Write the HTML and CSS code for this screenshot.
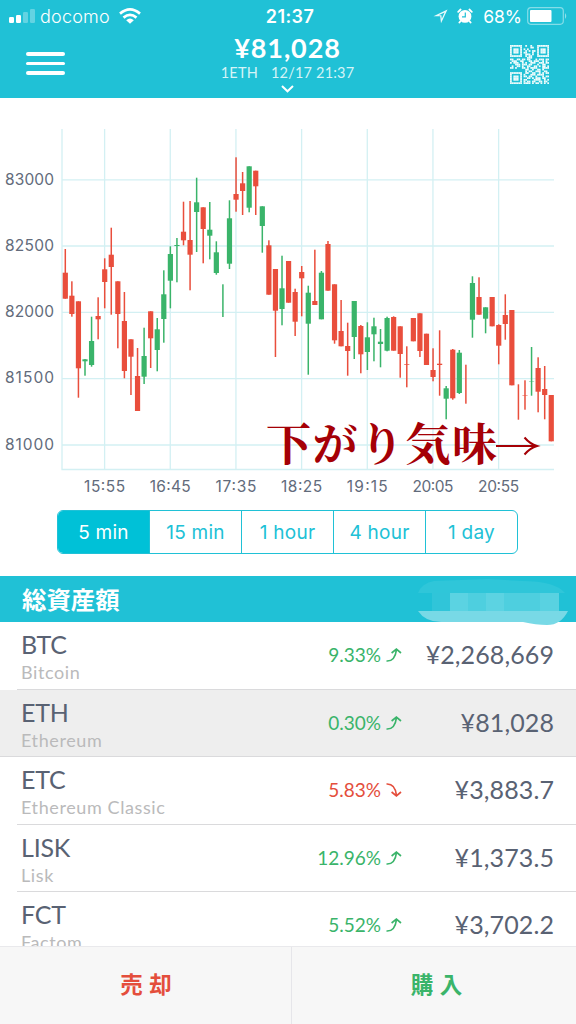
FILE: index.html
```html
<!DOCTYPE html>
<html lang="ja">

<head>
    <meta charset="UTF-8">
    <title>ETH</title>
    <link rel="stylesheet" href="styles.css">
</head>

<body>
    <div class="header">
        <div class="status">
            <div class="status-left">
                <svg width="26" height="16" viewBox="0 0 26 16" fill="#fff">
                    <rect x="0" y="9" width="5" height="6" rx="1.2"/>
                    <rect x="7" y="7" width="5" height="8" rx="1.2"/>
                    <rect x="14" y="4" width="5" height="11" rx="1.2" opacity=".3"/>
                    <rect x="21" y="1" width="5" height="14" rx="1.2" opacity=".3"/>
                </svg>
                <span class="carrier">docomo</span>
                <svg width="22" height="16" viewBox="0 0 22 16" fill="none" stroke="#fff" stroke-width="2.7">
                    <path d="M1 5.6Q11-2.8 21 5.6M4.5 9.6Q11 4.1 17.5 9.6"/>
                    <path d="M7.2 12.2Q11 9 14.8 12.2L11 15.8Z" fill="#fff" stroke="none"/>
                </svg>
            </div>
            <div class="clock">21:37</div>
            <div class="status-right">
                <svg width="15" height="15" viewBox="0 0 15 15">
                    <path d="M14.5 .5L.5 7.3H7.2L8 14.3ZM11.6 3.6L8.8 9.8L8.4 6.2H5.6Z" fill="#e8fafb" fill-rule="evenodd"/>
                </svg>
                <svg class="alarm" width="16" height="16" viewBox="0 0 16 16">
                    <circle cx="8" cy="8.4" r="6.4" fill="#fff"/>
                    <path d="M1.2 3.8L3.6 1.5M14.8 3.8L12.4 1.5M3.4 13.2L2.4 14.6M12.6 13.2L13.6 14.6" stroke="#fff" stroke-width="1.8" stroke-linecap="round"/>
                    <path d="M8.3 4.6V8.8H5" fill="none" stroke="#20c1d6" stroke-width="1.2"/>
                </svg>
                <span class="percent">68%</span>
                <svg width="41" height="18" viewBox="0 0 41 18">
                    <rect x=".7" y=".7" width="35.6" height="16.6" rx="3.2" fill="none" stroke="#fff" stroke-opacity=".45" stroke-width="1.2"/>
                    <rect x="3" y="3" width="21.5" height="12" rx="1" fill="#fff"/>
                    <path d="M38 6Q40.5 9 38 12Z" fill="#fff" opacity=".5"/>
                </svg>
            </div>
        </div>
        <div class="nav">
            <a href="javascript:;" class="menu"><i></i><i></i><i></i></a>
            <div class="title">
                <div class="price">¥81,028</div>
                <div class="sub"><span>1ETH</span><span>12/17 21:37</span></div>
                <svg width="13" height="8" viewBox="0 0 13 8" fill="none" stroke="#fff" stroke-width="2">
                    <path d="M1 1L6.5 6.3L12 1"/>
                </svg>
            </div>
            <svg id="qr" class="qr" width="39" height="39" viewBox="0 0 23 23"></svg>
        </div>
    </div>

    <svg id="chart" class="chart" width="576" height="412" viewBox="0 98 576 412">
        <g id="grid"></g>
        <g id="candles"></g>
        <text class="note" x="266" y="461" textLength="231">下がり気味</text>
        <path class="arrow" d="M496 446H536M524.5 437.5Q530 444 537 446Q530 448 524.5 454.5"/>
    </svg>

    <div class="tabs">
        <a href="javascript:;" class="active">5 min</a><a href="javascript:;">15 min</a><a href="javascript:;">1 hour</a><a href="javascript:;">4 hour</a><a href="javascript:;">1 day</a>
    </div>

    <div class="total">
        <span>総資産額</span>
        <svg class="mosaic" width="150" height="46" viewBox="0 0 150 46">
            <path d="M0 17Q4 7 16 5L70 3L104 5Q137 5 147 17Z" fill="#2fc6d9"/>
            <rect x="14" y="17" width="18" height="18" fill="#30c5d9"/>
            <rect x="32" y="17" width="109" height="18" fill="#4ecfdf"/>
            <rect x="32" y="17" width="18" height="18" fill="#5bd3e2"/>
            <rect x="68" y="17" width="18" height="18" fill="#5cd3e2"/>
            <rect x="122" y="17" width="19" height="18" fill="#59d2e1"/>
            <path d="M0 35H150Q143 49 129 49Q118 49 105 46H26Q8 47 0 35Z" fill="#78d9e6"/>
        </svg>
    </div>

    <div class="list">
        <div class="row">
            <div class="coin"><b>BTC</b><span>Bitcoin</span></div>
            <div class="rate up">9.33%<svg width="16" height="14" viewBox="0 0 16 14"><path d="M.5 13Q9 13.5 10.4 2M5.6 5L10.4 1.2L15 5"/></svg></div>
            <div class="value">¥2,268,669</div>
        </div>
        <div class="row current">
            <div class="coin"><b>ETH</b><span>Ethereum</span></div>
            <div class="rate up">0.30%<svg width="16" height="14" viewBox="0 0 16 14"><path d="M.5 13Q9 13.5 10.4 2M5.6 5L10.4 1.2L15 5"/></svg></div>
            <div class="value">¥81,028</div>
        </div>
        <div class="row">
            <div class="coin"><b>ETC</b><span>Ethereum Classic</span></div>
            <div class="rate down">5.83%<svg width="16" height="14" viewBox="0 0 16 14"><path d="M.5 1Q9 .5 10.4 12M5.6 9L10.4 12.8L15 9"/></svg></div>
            <div class="value">¥3,883.7</div>
        </div>
        <div class="row">
            <div class="coin"><b>LISK</b><span>Lisk</span></div>
            <div class="rate up">12.96%<svg width="16" height="14" viewBox="0 0 16 14"><path d="M.5 13Q9 13.5 10.4 2M5.6 5L10.4 1.2L15 5"/></svg></div>
            <div class="value">¥1,373.5</div>
        </div>
        <div class="row">
            <div class="coin"><b>FCT</b><span>Factom</span></div>
            <div class="rate up">5.52%<svg width="16" height="14" viewBox="0 0 16 14"><path d="M.5 13Q9 13.5 10.4 2M5.6 5L10.4 1.2L15 5"/></svg></div>
            <div class="value">¥3,702.2</div>
        </div>
    </div>

    <div class="footer">
        <a href="javascript:;" class="sell">売 却</a>
        <a href="javascript:;" class="buy">購 入</a>
    </div>

    <script src="chart.js"></script>
</body>

</html>
```

FILE: styles.css
```css
* {
    margin: 0;
    padding: 0;
    box-sizing: border-box;
    text-decoration: none;
}

body {
    display: flex;
    flex-direction: column;
    width: 576px;
    height: 1024px;
    overflow: hidden;
    background-color: #fff;
    font-family: Lato, "Noto Sans CJK JP", sans-serif;
    color: #596273;
}

svg {
    display: block;
    flex: none;
}

.header {
    flex: none;
    height: 98px;
    background-color: #20c1d6;
    color: #fff;
}

.status {
    display: grid;
    grid-template-columns: 1fr 60px 1fr;
    align-items: center;
    height: 32px;
    padding: 0 8px 0 9px;
    font-family: Inter, sans-serif;
}

.status-left,
.status-right {
    display: flex;
    align-items: center;
}

.status-right {
    justify-content: flex-end;
}

.carrier {
    width: 70px;
    margin: 0 9px 0 5px;
    font-size: 18px;
    letter-spacing: .2px;
    font-weight: 300;
}

.clock {
    padding-left: 3px;
    text-align: center;
    font-size: 18px;
    font-weight: 600;
    letter-spacing: .4px;
}

.alarm {
    margin: 0 10px 0 9px;
}

.percent {
    margin-right: 5px;
    font-size: 17.5px;
    font-weight: 400;
}

.nav {
    display: grid;
    grid-template-columns: 1fr 200px 1fr;
    height: 66px;
    padding: 0 27px 0 26px;
}

.menu {
    display: flex;
    flex-direction: column;
    gap: 6px;
    width: 39px;
    padding-top: 20px;
}

.menu i {
    height: 3.6px;
    border-radius: 2px;
    background-color: #fff;
}

.title {
    display: flex;
    flex-direction: column;
    align-items: center;
}

.price {
    line-height: 32px;
    font-size: 27px;
    font-weight: 700;
    letter-spacing: .9px;
}

.sub {
    display: flex;
    gap: 13px;
    height: 21px;
    line-height: 17px;
    font-size: 14.5px;
    letter-spacing: .2px;
    color: #d5f4f7;
}

.qr {
    justify-self: end;
    margin-top: 13px;
}

.chart {
    font-family: Inter, sans-serif;
    font-size: 15.5px;
    fill: #626b7b;
}

.line {
    stroke: #d3f0f3;
    stroke-width: 1.3;
}

.note {
    font-family: "Noto Serif CJK JP", "Noto Sans CJK JP", serif;
    font-size: 45px;
    font-weight: 700;
    fill: #a50006;
}

.arrow {
    fill: none;
    stroke: #a50006;
    stroke-width: 2;
}

.tabs {
    display: flex;
    flex: none;
    width: 461px;
    height: 44px;
    margin: 0 0 22px 57px;
    border: solid 1.6px #20c1d6;
    border-radius: 6px;
    overflow: hidden;
}

.tabs a {
    flex: 1;
    line-height: 43px;
    border-left: solid 1.6px #20c1d6;
    text-align: center;
    font-family: Inter, sans-serif;
    font-size: 19px;
    letter-spacing: .25px;
    color: #20c1d6;
}

.tabs a:first-child {
    border-left: 0;
}

.tabs .active {
    background-color: #00c1d7;
    color: #fff;
}

.total {
    display: flex;
    flex: none;
    justify-content: space-between;
    height: 46px;
    padding: 0 8px 0 22px;
    line-height: 45px;
    background-color: #20c1d6;
    color: #fff;
    font-size: 24.4px;
}

.total span {
    font-family: "Noto Sans CJK JP", sans-serif;
    font-weight: 600;
}

.mosaic {
    overflow: visible;
}

.list {
    flex: 1;
    overflow: hidden;
}

.row {
    display: flex;
    height: 67.5px;
    margin-left: 17px;
    padding: 0 22px 0 4px;
    border-bottom: solid 1px #dadadc;
}

.current {
    margin-left: 0;
    padding-left: 21px;
    background-color: #eee;
}

.coin {
    flex: 1;
    padding-top: 7px;
}

.coin b {
    display: block;
    line-height: 30px;
    font-size: 25px;
    font-weight: 400;
    letter-spacing: -.2px;
}

.coin span {
    display: block;
    line-height: 27px;
    font-size: 18px;
    letter-spacing: .6px;
    color: #bababb;
}

.rate {
    display: flex;
    align-items: center;
    gap: 5px;
    font-size: 19px;
    line-height: 66px;
}

.rate path {
    fill: none;
    stroke: currentColor;
    stroke-width: 1.7;
}

.up,
.buy {
    color: #3ab46a;
}

.down,
.sell {
    color: #e44e3c;
}

.value {
    width: 152px;
    line-height: 64px;
    text-align: right;
    font-size: 25px;
    letter-spacing: .1px;
}

.footer {
    display: flex;
    flex: none;
    height: 78px;
    border-top: solid 1px #e9e9ec;
    background-color: #f7f7f7;
}

.footer a {
    flex: 1;
    line-height: 76px;
    padding-left: 5px;
    text-align: center;
    font-size: 22.5px;
    font-weight: 700;
    word-spacing: 1px;
}

.footer .sell {
    flex: 0 0 292px;
    padding-left: 1px;
    border-right: solid 1.5px #e6e6ea;
}
```

FILE: chart.js
```js
// x step of one 5 min candle
var STEP = 6.567, START = 65.3;
var NS = 'http://www.w3.org/2000/svg';

// [wick top, body top, body bottom, wick bottom, 1 = up]
var data = [
    [249, 272.7, 298.7, 298.7, 0], [281.3, 295.7, 314, 316.7, 0], [301.3, 301.3, 368.3, 397.7, 0],
    [359, 359.3, 361.3, 375.7, 1], [316.7, 341, 365, 366.7, 1], [297.3, 316, 319.3, 339.3, 0],
    [258.3, 269.3, 282, 308.3, 0], [227.7, 254.7, 267, 314.7, 0], [281.3, 281.3, 314, 348.3, 0],
    [292, 321, 371, 378.3, 0], [339.3, 339.3, 356.7, 395, 0], [348, 376, 411, 411, 0],
    [327.7, 356, 376.7, 384, 1], [311.3, 311.3, 338.3, 368, 0], [318, 329.3, 350, 371.3, 1],
    [270.3, 294.3, 319, 342.7, 1], [246.3, 254, 280.7, 308.3, 1], [238, 245, 246, 282.3, 1],
    [201.7, 231.7, 240.3, 245.3, 0], [201, 240, 254.7, 290.3, 0], [177.7, 202.3, 212, 252, 1],
    [207.3, 207.3, 229, 263.3, 0], [202, 229.7, 235.7, 259.3, 1], [241.3, 252.3, 273, 274.7, 1],
    [284.3, 300, 300, 317, 1], [200.3, 218.3, 263.7, 269, 1], [157.3, 194, 199.7, 211.7, 0],
    [172, 183.3, 191, 215, 0], [166.3, 166.3, 207.7, 212.3, 1], [170.7, 170.7, 186.3, 215, 0],
    [206.3, 206.3, 226, 252.7, 1], [240.3, 245.3, 294.7, 294.7, 0], [269, 269, 310.7, 357, 0],
    [255.7, 288.3, 309, 325.3, 1], [261, 261, 302.7, 302.7, 0], [288.7, 292, 321.7, 336, 0],
    [266, 272, 278.3, 316.3, 0], [285.7, 292.7, 323.7, 374.7, 1], [249.7, 301, 305, 305, 0],
    [271, 272.7, 319.3, 319.3, 1], [241, 244, 290.7, 290.7, 0], [284.3, 284.3, 340.3, 343.7, 0],
    [300, 331, 346.3, 346.3, 0], [322.7, 346, 351, 375.7, 0], [301, 301, 337, 359, 1],
    [325, 326, 354.3, 373.3, 0], [322.3, 337.3, 352, 370, 1], [317.7, 326.3, 334.3, 361.3, 1],
    [329, 341.7, 344, 367.3, 1], [316.7, 318, 350.7, 351.3, 1], [316.3, 317, 350.7, 350.7, 0],
    [326.3, 326.3, 354, 377.7, 0], [346.3, 364, 364.7, 387.3, 0], [318, 318, 341.3, 341.3, 0],
    [313.3, 313.3, 351, 357, 0], [333.7, 333.7, 365, 365, 0], [348.3, 370, 377, 381.3, 0],
    [330.3, 363.7, 365, 395.7, 0], [386, 388.3, 398.7, 419.3, 1], [349, 349.7, 398.3, 399.7, 0],
    [350, 352.7, 393, 394, 1], [364.7, 380, 380, 403.7, 0], [276.3, 283, 319.7, 337.7, 1],
    [277.3, 297, 314.7, 314.7, 0], [307.3, 307.3, 318.7, 333.3, 1], [297, 297, 326.3, 326.3, 0],
    [324.3, 325, 345.7, 364.3, 0], [294.3, 315, 324, 339.7, 0], [310, 310, 385.3, 385.3, 0],
    [384.3, 400, 400, 419.7, 0], [380.3, 395.2, 395.7, 409.7, 0], [347, 381.3, 381.7, 395.7, 1],
    [357.3, 368, 391.7, 412.3, 0], [366, 389, 395, 419.3, 0], [395, 395, 441.3, 441.3, 0]
];

function add(parent, name, attrs, text) {
    var el = document.createElementNS(NS, name);
    for (var k in attrs) {
        el.setAttribute(k, attrs[k]);
    }
    if (text) el.textContent = text;
    parent.appendChild(el);
}

var grid = document.getElementById('grid');
var prices = [[83000, 179.8], [82500, 246], [82000, 312.3], [81500, 378.6], [81000, 445]];
var times = ['15:55', '16:45', '17:35', '18:25', '19:15', '20:05', '20:55'];

add(grid, 'path', {'class': 'line', d: 'M62 129V469.5H554', fill: 'none'});
for (var i = 0; i < prices.length; i++) {
    var y = prices[i][1];
    add(grid, 'path', {'class': 'line', d: 'M62 ' + y + 'H554'});
    add(grid, 'text', {x: 5, y: y + 4.7, textLength: 49}, prices[i][0]);
}
for (var i = 0; i < times.length; i++) {
    var x = 104.6 + i * 65.67;
    add(grid, 'path', {'class': 'line', d: 'M' + x + ' 129V469.5'});
    add(grid, 'text', {x: x - 20.5, y: 491.5, textLength: 41}, times[i]);
}

var candles = document.getElementById('candles');
for (var i = 0; i < data.length; i++) {
    var c = data[i], cx = START + i * STEP;
    var color = c[4] ? '#3ab46a' : '#e94e3c';
    add(candles, 'rect', {x: cx - .75, y: c[0], width: 1.5, height: c[3] - c[0], fill: color});
    add(candles, 'rect', {x: cx - 2.6, y: c[1], width: 5.2, height: c[2] - c[1], fill: color});
}

// QR icon
var rows = [
    '#######..#..#.. #######',
    '#.....#.....##. #.....#',
    '#.###.#.#.#.... #.###.#',
    '#.###.#..#.#.## #.###.#',
    '#.###.#.##...#. #.###.#',
    '#.....#..###.#. #.....#',
    '#######..#.##.. #######',
    '..........###..........',
    '##..##.##.##...#.###.##',
    '.###..##...##.###..#.#.',
    '#.###..#.#..###..###.##',
    '...###.###.##...#..##..',
    '.#..##.#..##..##.#.##.#',
    '##.#...##.#.####...####',
    '.........##..#..##.#...',
    '.........#.##..###..##.',
    '#######..##..##..#.#.##',
    '#.....#.#...###.####...',
    '#.###.#.##.##..#...#.##',
    '#.###.#...##.#.###.##..',
    '#.###.#.##....####..#.#',
    '#.....#.#.##.##..##.##.',
    '#######.####.#.##.#.#.#'
];
var qr = document.getElementById('qr');
for (var r = 0; r < rows.length; r++) {
    for (var k = 0; k < 23; k++) {
        if (rows[r].charAt(k) == '#') {
            add(qr, 'rect', {x: k, y: r, width: 1.05, height: 1.05, fill: '#effcfc'});
        }
    }
}
```
